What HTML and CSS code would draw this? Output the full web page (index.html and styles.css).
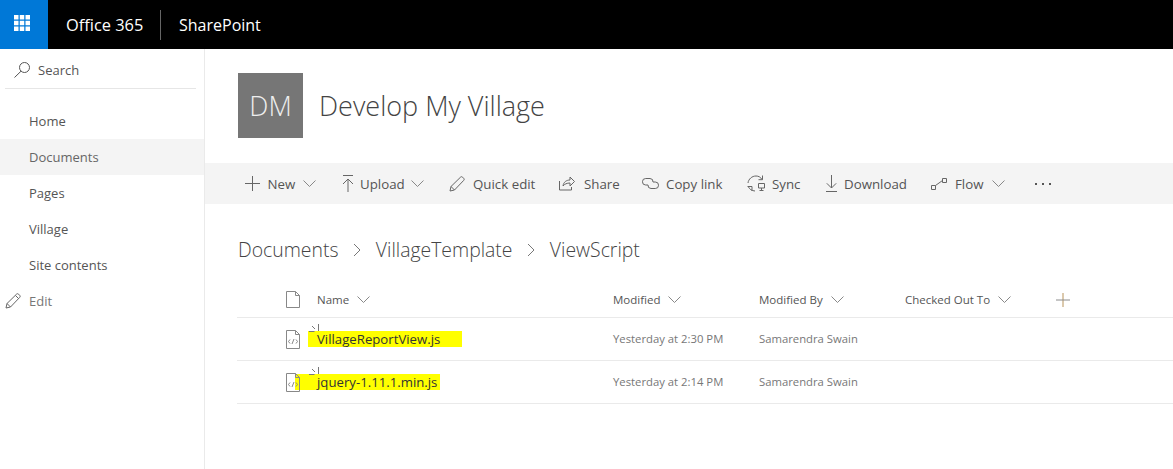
FILE: index.html
```html
<!DOCTYPE html>
<html lang="en">
<head>
<meta charset="utf-8">
<title>Documents - Develop My Village</title>
<link rel="stylesheet" href="styles.css">
</head>
<body>
<header class="suite">
  <div class="waffle">
    <svg width="16" height="16" viewBox="0 0 16 16"><rect x="0" y="0" width="4.5" height="4.5"/><rect x="5.75" y="0" width="4.5" height="4.5"/><rect x="11.5" y="0" width="4.5" height="4.5"/><rect x="0" y="5.75" width="4.5" height="4.5"/><rect x="5.75" y="5.75" width="4.5" height="4.5"/><rect x="11.5" y="5.75" width="4.5" height="4.5"/><rect x="0" y="11.5" width="4.5" height="4.5"/><rect x="5.75" y="11.5" width="4.5" height="4.5"/><rect x="11.5" y="11.5" width="4.5" height="4.5"/></svg>
  </div>
  <span class="brand">Office 365</span>
  <span class="divider"></span>
  <span class="app">SharePoint</span>
</header>
<div class="body">
  <nav class="side">
    <div class="search">
      <svg width="16" height="16" viewBox="0 0 16 16"><circle cx="10.5" cy="5.5" r="5"/><path d="M7 9.200 .5 15.500"/></svg>
      <span>Search</span>
    </div>
    <ul class="nav">
      <li>Home</li>
      <li class="active">Documents</li>
      <li>Pages</li>
      <li>Village</li>
      <li>Site contents</li>
      <li class="edit">
        <svg width="16" height="16" viewBox="0 0 16 16"><path d="M1 15l1-4.500L11.500 1.200a1.500 1.500 0 0 1 2.100 0l1.100 1.100a1.500 1.500 0 0 1 0 2.100L5.500 14z"/><path d="M2 10.500 5.500 14M10.500 2.500l3 3"/></svg>
        <span>Edit</span>
      </li>
    </ul>
  </nav>
  <main class="main">
    <section class="site">
      <div class="logo">DM</div>
      <h1>Develop My Village</h1>
    </section>
    <div class="cmd">
      <span class="item i-new"><svg width="15" height="15" viewBox="0 0 15 15"><path d="M7.500 0v15M0 7.500h15"/></svg>New<svg class="chev" width="13" height="7" viewBox="0 0 13 7"><path d="M.5.500 6.500 6.500l6-6"/></svg></span>
      <span class="item i-up"><svg width="12" height="17" viewBox="0 0 12 17"><path d="M1 .5h10M6 17V4M1 9 6 4l5 5"/></svg>Upload<svg class="chev" width="13" height="7" viewBox="0 0 13 7"><path d="M.5.500 6.500 6.500l6-6"/></svg></span>
      <span class="item i-edit"><svg width="16" height="16" viewBox="0 0 16 16"><path d="M1 15l1-4.500L11.500 1.200a1.500 1.500 0 0 1 2.100 0l1.100 1.100a1.500 1.500 0 0 1 0 2.100L5.500 14z"/><path d="M2 10.500 5.500 14"/></svg>Quick edit</span>
      <span class="item i-share"><svg width="16" height="15" viewBox="0 0 16 15"><path d="M.5 5v9h12v-3M4 10c.5-4 3.500-6 7-6V1l4.500 4.500L11 10V7c-3 0-5.500 1-7 3z"/></svg>Share</span>
      <span class="item i-link"><svg width="17" height="11" viewBox="0 0 17 11"><path d="M6 7H3.700a3.200 3.200 0 0 1 0-6.500h4.300a3.200 3.200 0 0 1 3 3.500"/><path d="M11 4h2.300a3.200 3.200 0 0 1 0 6.500H9a3.200 3.200 0 0 1-3-3.500"/></svg>Copy link</span>
      <span class="item i-sync"><svg width="18" height="17" viewBox="0 0 18 17"><path d="M1 8C1.500 4 5 1 9 1c2.500 0 4.500 1 6 3.500M15.500 .5v4.200H11.500"/><path d="M.5 11.500h4.500v4.500M1.500 12c1 2 3 3.800 6.500 4"/><path d="M11.500 8.500h6v4.500h-6zM12.500 15.500h4M14.500 13v2.500"/></svg>Sync</span>
      <span class="item i-down"><svg width="11" height="17" viewBox="0 0 11 17"><path d="M5.500 0v13M.8 8.300 5.500 13l4.700-4.700M0 16.500h11"/></svg>Download</span>
      <span class="item i-flow"><svg width="16" height="12" viewBox="0 0 16 12"><path d="M.5 7.500h4v4h-4zM11.500.5h4v4h-4zM4.500 7.500l7-5"/></svg>Flow<svg class="chev" width="13" height="7" viewBox="0 0 13 7"><path d="M.5.500 6.500 6.500l6-6"/></svg></span>
      <span class="more"><i></i><i></i><i></i></span>
    </div>
    <div class="crumbs">
      <span>Documents</span>
      <svg width="8" height="14" viewBox="0 0 8 14"><path d="M1 1l6 6-6 6"/></svg>
      <span>VillageTemplate</span>
      <svg width="8" height="14" viewBox="0 0 8 14"><path d="M1 1l6 6-6 6"/></svg>
      <span>ViewScript</span>
    </div>
    <div class="list">
      <div class="row head">
        <div class="c-icon"><svg class="page" width="14" height="17" viewBox="0 0 14 17"><path d="M.5.500h9l4 4v12H.5zM9.500.5v4h4"/></svg></div>
        <div class="c-name">Name<svg class="chev" width="13" height="7" viewBox="0 0 13 7"><path d="M.5.500 6.500 6.500l6-6"/></svg></div>
        <div class="c-mod">Modified<svg class="chev" width="13" height="7" viewBox="0 0 13 7"><path d="M.5.500 6.500 6.500l6-6"/></svg></div>
        <div class="c-by">Modified By<svg class="chev" width="13" height="7" viewBox="0 0 13 7"><path d="M.5.500 6.500 6.500l6-6"/></svg></div>
        <div class="c-out">Checked Out To<svg class="chev" width="13" height="7" viewBox="0 0 13 7"><path d="M.5.500 6.500 6.500l6-6"/></svg></div>
        <div class="c-add"><svg width="14" height="14" viewBox="0 0 14 14"><path class="plus-v" d="M7 0v14"/><path class="plus-h" d="M0 7h14"/></svg></div>
      </div>
      <div class="row file">
        <div class="c-icon"><svg class="page" width="14" height="19" viewBox="0 0 14 19"><path d="M.5.500h9l4 4v14H.5zM9.500.5v4h4"/><path d="M4 9.500 2.500 11.500 4 13.500M6 14 8 9M10 9.500l1.500 2-1.500 2"/></svg></div>
        <div class="c-name"><span class="new"><svg width="10" height="9" viewBox="0 0 10 9"><path d="M9.500 0v7M0 7.500h5.500M3 2l3 3"/></svg></span><mark class="hl hl-a">VillageReportView.js</mark></div>
        <div class="c-mod sub">Yesterday at 2:30 PM</div>
        <div class="c-by sub">Samarendra Swain</div>
      </div>
      <div class="row file">
        <div class="c-icon"><svg class="page" width="14" height="19" viewBox="0 0 14 19"><path d="M.5.500h9l4 4v14H.5zM9.500.5v4h4"/><path d="M4 9.500 2.500 11.500 4 13.500M6 14 8 9M10 9.500l1.500 2-1.500 2"/></svg></div>
        <div class="c-name"><span class="new"><svg width="10" height="9" viewBox="0 0 10 9"><path d="M9.500 0v7M0 7.500h5.500M3 2l3 3"/></svg></span><mark class="hl hl-b">jquery-1.11.1.min.js</mark></div>
        <div class="c-mod sub">Yesterday at 2:14 PM</div>
        <div class="c-by sub">Samarendra Swain</div>
      </div>
    </div>
  </main>
</div>
</body>
</html>
```
FILE: styles.css
```css
* { box-sizing: border-box; }
html, body { margin: 0; height: 100%; overflow: hidden; }
body { font-family: "Open Sans", "Noto Sans", sans-serif; color: #333; background: #fff; }
svg { display: block; flex: none; fill: none; stroke: #666; stroke-width: 1; }

.suite { height: 49px; background: #000; display: flex; align-items: center; color: #fff; }
.waffle { width: 48px; height: 49px; background: #0078d7; padding: 15px 0 0 14px; }
.waffle svg { stroke: none; fill: #fff; }
.brand { font-size: 16.4px; margin-left: 18px; width: 86px; }
.divider { width: 1px; height: 30px; background: #666; margin-left: 8px; }
.app { font-size: 16px; margin-left: 18px; }

.body { display: flex; height: 420px; }
.side { width: 205px; border-right: 1px solid #eaeaea; flex: none; }
.search { margin-left: 5px; width: 191px; height: 40px; border-bottom: 1px solid #e6e6e6; display: flex; align-items: center; gap: 8px; padding: 3px 0 0 9px; font-size: 13px; color: #555; }
.search svg { stroke: #555; }
.nav { list-style: none; margin: 14px 0 0; padding: 0; font-size: 13px; color: #555; }
.nav li { height: 36px; display: flex; align-items: center; padding-left: 29px; }
.nav .active { background: #f4f4f4; color: #666; }
.nav .edit { padding-left: 5px; gap: 8px; color: #777; }

.main { flex: 1; min-width: 0; }
.site { height: 114px; padding: 24px 0 0 33px; display: flex; gap: 16px; }
.logo { width: 65px; height: 65px; background: #767676; color: #eee; font-size: 27px; font-weight: 300; display: flex; align-items: center; justify-content: center; }
h1 { margin: 0; font-size: 27px; font-weight: 300; color: #444; height: 65px; line-height: 65px; }

.cmd { height: 41px; background: #f4f4f4; display: flex; align-items: center; padding-left: 40px; font-size: 13.3px; color: #555; }
.item { display: flex; align-items: center; white-space: nowrap; }
.chev { stroke: #888; }
.i-new { width: 96px; gap: 7.5px; }
.i-up { width: 108px; gap: 6px; padding-left: 1px; }
.i-edit { width: 110px; gap: 8px; }
.i-share { width: 83px; gap: 9px; }
.i-link { width: 105px; gap: 7px; }
.i-sync { width: 78px; gap: 7px; }
.i-down { width: 106px; gap: 7px; padding-left: 1px; }
.i-flow { width: 104px; gap: 8px; }
.more { display: flex; gap: 5px; }
.more i { width: 2px; height: 2px; background: #555; }

.crumbs { height: 43px; margin-top: 24px; padding-left: 33px; display: flex; align-items: center; gap: 14.7px; font-size: 19.4px; font-weight: 300; color: #444; }
.crumbs svg { stroke: #777; }

.list { margin-left: 32px; }
.row { display: flex; align-items: center; border-bottom: 1px solid #eaeaea; font-size: 11.5px; color: #555; }
.head { height: 47px; padding-top: 11px; }
.file { height: 43px; font-size: 13.2px; color: #333; }
.c-icon { width: 80px; padding-left: 49px; position: relative; z-index: 1; }
.c-name { width: 296px; display: flex; align-items: center; gap: 8px; position: relative; }
.c-mod { width: 146px; display: flex; align-items: center; gap: 8px; }
.c-by { width: 146px; display: flex; align-items: center; gap: 8px; }
.c-out { width: 151px; display: flex; align-items: center; gap: 8px; }
.sub { font-size: 11.3px; color: #777; margin-bottom: 2px; }
.page { stroke: #888; }
.plus-v { stroke: #b8935a; }
.plus-h { stroke: #8c8c8c; }
.hl { background: #ff0; color: #333; display: block; height: 16px; line-height: 16px; }
.hl-a { width: 154px; margin-left: -9px; padding-left: 9px; }
.hl-b { width: 145px; margin-left: -22px; padding-left: 22px; }
.new { position: absolute; left: -8px; top: -7px; z-index: 1; }
.new svg { stroke: #777; }
```
